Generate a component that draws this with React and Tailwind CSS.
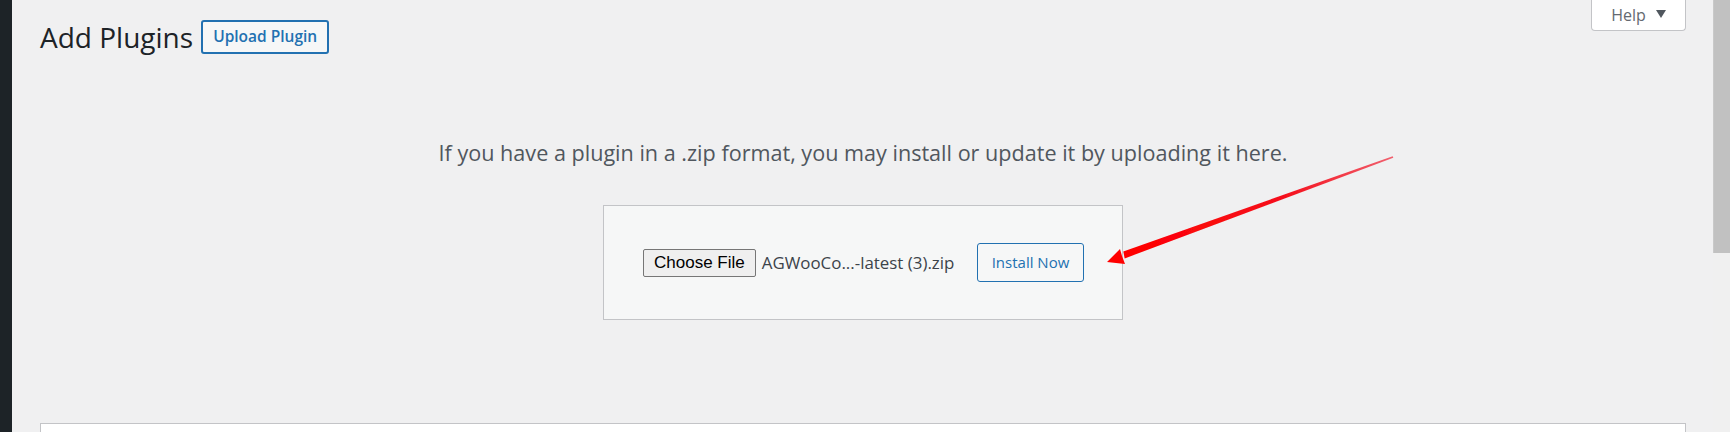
export default function App(){
  return (
    <div className="flex h-[432px] w-full overflow-hidden bg-[#f0f0f1] font-['Open_Sans',sans-serif]">
      <div className="w-[12px] shrink-0 bg-[#1d2327]"/>

      <div className="relative flex-1 pl-[28px] pr-[27px]">
        {/* help tab */}
        <div className="absolute right-[27px] top-0 flex h-[31px] w-[95px] items-center justify-center gap-[10px] rounded-b-[4px] border border-t-0 border-[#c3c4c7] bg-white text-[16px] text-[#646970]">
          <span>Help</span>
          <svg width="10" height="8" viewBox="0 0 10 8" className="mt-[-3px]"><path d="M0 0h10L5 8z" fill="#50575e"/></svg>
        </div>

        <div className="flex items-center gap-[8px] pt-[20px]">
          <h1 className="text-[28px] leading-[34px] text-[#1d2327]">Add Plugins</h1>
          <button className="h-[34px] rounded-[3px] border-2 border-[#2271b1] bg-[#f6f7f7] px-[10px] text-[15.5px] font-semibold text-[#2271b1]">Upload Plugin</button>
        </div>

        <p className="mt-[85px] text-center text-[21.6px] leading-[28px] text-[#50575e]">If you have a plugin in a .zip format, you may install or update it by uploading it here.</p>

        <div className="mx-auto mt-[38px] flex h-[115px] w-[520px] items-center bg-[#f6f7f7] border border-[#c3c4c7] pl-[39px] pr-[38px]">
          <span className="flex h-[28px] items-center rounded-[2px] border border-[#767676] bg-[#efefef] px-[10px] font-['Liberation_Sans',sans-serif] text-[17px] text-black">Choose File</span>
          <span className="ml-[6px] text-[16.9px] text-[#3c434a]">AGWooCo...-latest (3).zip</span>
          <button className="ml-auto h-[39px] w-[107px] rounded-[3px] border border-[#2271b1] bg-[#f6f7f7] text-[15px] text-[#2271b1]">Install Now</button>
        </div>

        <div className="mt-[103px] h-[40px] border border-[#c3c4c7] bg-white"/>

        <svg className="pointer-events-none absolute left-0 top-0" width="1701" height="432">
          <defs>
            <linearGradient id="shaft" x1="1381" y1="157" x2="1110" y2="256" gradientUnits="userSpaceOnUse">
              <stop offset="0" stopColor="#f0606e"/>
              <stop offset="0.4" stopColor="#f5101c"/>
              <stop offset="1" stopColor="#ff0000"/>
            </linearGradient>
            <filter id="soft"><feGaussianBlur stdDeviation="0.5"/></filter>
          </defs>
          <g filter="url(#soft)">
            <polygon points="1380.7,156.2 1381.3,157.8 1112.7,258.4 1111.3,251.6" fill="url(#shaft)"/>
            <polygon points="1095,262 1108,249 1110,256 1113,264" fill="#ff0000"/>
          </g>
        </svg>
      </div>

      <div className="flex w-[17px] shrink-0 flex-col bg-[#f0f0f0]">
        <div className="h-[253px] border-l border-[#c9c9c9] bg-[#c1c1c1]"/>
      </div>
    </div>
  )
}
